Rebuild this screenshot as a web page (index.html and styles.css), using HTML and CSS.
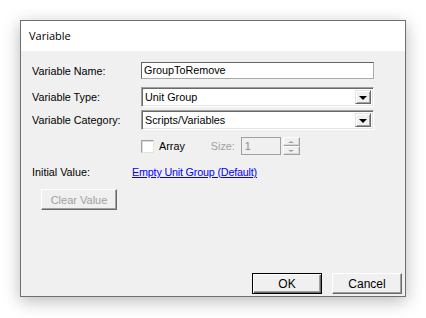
FILE: index.html
```html
<!DOCTYPE html>
<html>
<head>
<meta charset="utf-8">
<link rel="stylesheet" href="styles.css">
</head>
<body>
<div class="window">
  <div class="titlebar">Variable</div>
  <div class="client">
    <div class="form">
      <div class="row row-name">
        <span class="label">Variable Name:</span>
        <div class="edit">GroupToRemove</div>
      </div>
      <div class="row row-type">
        <span class="label">Variable Type:</span>
        <div class="combo"><span class="combo-text">Unit Group</span><span class="drop"><span class="tri"></span></span></div>
      </div>
      <div class="row row-cat">
        <span class="label">Variable Category:</span>
        <div class="combo"><span class="combo-text">Scripts/Variables</span><span class="drop"><span class="tri"></span></span></div>
      </div>
      <div class="row row-array">
        <span class="label"></span>
        <span class="check"></span>
        <span class="array-text">Array</span>
        <span class="size-label">Size:</span>
        <div class="size-edit">1</div>
        <div class="spin">
          <span class="spin-btn"><span class="tri-up"></span></span>
          <span class="spin-btn"><span class="tri-down"></span></span>
        </div>
      </div>
      <div class="row row-init">
        <span class="label label-init">Initial Value:</span>
        <a class="link">Empty Unit Group (Default)</a>
      </div>
      <div class="row row-clear">
        <div class="btn btn-disabled">Clear Value</div>
      </div>
    </div>
    <div class="footer">
      <div class="btn btn-default">OK</div>
      <div class="btn">Cancel</div>
    </div>
  </div>
</div>
</body>
</html>
```

FILE: styles.css
```css
html, body {
  margin: 0;
  padding: 0;
  background: #ffffff;
}
body {
  width: 426px;
  height: 318px;
  overflow: hidden;
  font-family: "Liberation Sans", Arial, sans-serif;
  font-size: 10.8px;
  color: #000;
}
.window {
  margin: 20px 0 0 20px;
  width: 386px;
  height: 277px;
  box-sizing: border-box;
  border: 1px solid #6f6f6f;
  box-shadow: 0 4px 16px rgba(0, 0, 0, 0.28);
  display: flex;
  flex-direction: column;
  background: #f0f0f0;
}
.titlebar {
  height: 30px;
  background: #ffffff;
  font-family: "Open Sans", "Noto Sans", sans-serif;
  font-size: 11px;
  line-height: 30px;
  padding-left: 8px;
  color: #000;
}
.client {
  flex: 1;
  display: flex;
  flex-direction: column;
  padding: 11px 2px 2px 11px;
}
.form {
  display: flex;
  flex-direction: column;
}
.row {
  display: flex;
  align-items: center;
}
.label {
  width: 109px;
  flex: none;
}
.row-name { height: 17px; }
.row-type { height: 20px; margin-top: 8px; }
.row-cat { height: 20px; margin-top: 3px; }
.row-array { height: 18px; margin-top: 7px; }
.row-init { height: 14px; margin-top: 10px; }
.row-clear { margin-top: 10px; padding-left: 9px; }

.edit {
  width: 233px;
  height: 17px;
  box-sizing: border-box;
  border: 1px solid #7a7a7a;
  border-color: #646464 #aaaaaa #aaaaaa #646464;
  background: #fff;
  padding-left: 2px;
  line-height: 15px;
}
.combo {
  width: 233px;
  height: 20px;
  box-sizing: border-box;
  border: 1px solid;
  border-color: #a0a0a0 #ffffff #ffffff #a0a0a0;
  box-shadow: inset 1px 1px 0 #696969, inset -1px -1px 0 #e3e3e3;
  background: #fff;
  display: flex;
  align-items: center;
  padding: 2px 2px 2px 3px;
}
.combo-text {
  flex: 1;
  line-height: 14px;
}
.drop {
  width: 16px;
  height: 14px;
  box-sizing: border-box;
  background: #f0f0f0;
  border: 1px solid;
  border-color: #e3e3e3 #696969 #696969 #e3e3e3;
  box-shadow: inset 1px 1px 0 #ffffff, inset -1px -1px 0 #a0a0a0;
  display: flex;
  align-items: center;
  justify-content: center;
}
.tri {
  width: 0;
  height: 0;
  border-left: 4px solid transparent;
  border-right: 4px solid transparent;
  border-top: 4px solid #000;
  margin-top: 1px;
}
.check {
  width: 13px;
  height: 13px;
  box-sizing: border-box;
  background: #fff;
  border: 1px solid;
  border-color: #a0a0a0 #e3e3e3 #e3e3e3 #a0a0a0;
  box-shadow: inset 1px 1px 0 #dcdcdc;
}
.array-text {
  margin-left: 5px;
}
.size-label {
  margin-left: 26px;
  color: #a0a0a0;
}
.size-edit {
  margin-left: 6px;
  width: 40px;
  height: 18px;
  box-sizing: border-box;
  border: 1px solid #a0a0a0;
  background: #f0f0f0;
  color: #8a8a8a;
  padding-left: 3px;
  line-height: 16px;
}
.spin {
  margin-left: 2px;
  width: 17px;
  height: 18px;
  display: flex;
  flex-direction: column;
}
.spin-btn {
  flex: 1;
  box-sizing: border-box;
  background: #f0f0f0;
  border: 1px solid;
  border-color: #ffffff #a0a0a0 #a0a0a0 #ffffff;
  box-shadow: inset -1px -1px 0 #d8d8d8;
  display: flex;
  align-items: center;
  justify-content: center;
}
.tri-up {
  width: 0; height: 0;
  border-left: 3px solid transparent;
  border-right: 3px solid transparent;
  border-bottom: 2px solid #a0a0a0;
}
.tri-down {
  width: 0; height: 0;
  border-left: 3px solid transparent;
  border-right: 3px solid transparent;
  border-top: 2px solid #a0a0a0;
}
.label-init {
  width: 100px;
}
.link {
  color: #0000ff;
  text-decoration: underline;
  letter-spacing: -0.2px;
}
.btn {
  width: 70px;
  height: 21px;
  box-sizing: border-box;
  background: #f0f0f0;
  border: 1px solid;
  border-color: #ffffff #696969 #696969 #ffffff;
  box-shadow: inset -1px -1px 0 #a0a0a0;
  display: flex;
  align-items: center;
  justify-content: center;
  font-size: 12px;
}
.btn-disabled {
  width: 76px;
  color: #a0a0a0;
  font-size: 11px;
}
.btn-default {
  border: 1px solid #000;
  box-shadow: inset 1px 1px 0 #ffffff, inset -1px -1px 0 #696969, inset -2px -2px 0 #a0a0a0;
}
.footer {
  margin-top: auto;
  display: flex;
  justify-content: flex-end;
  gap: 10px;
  padding-right: 1px;
}
```
